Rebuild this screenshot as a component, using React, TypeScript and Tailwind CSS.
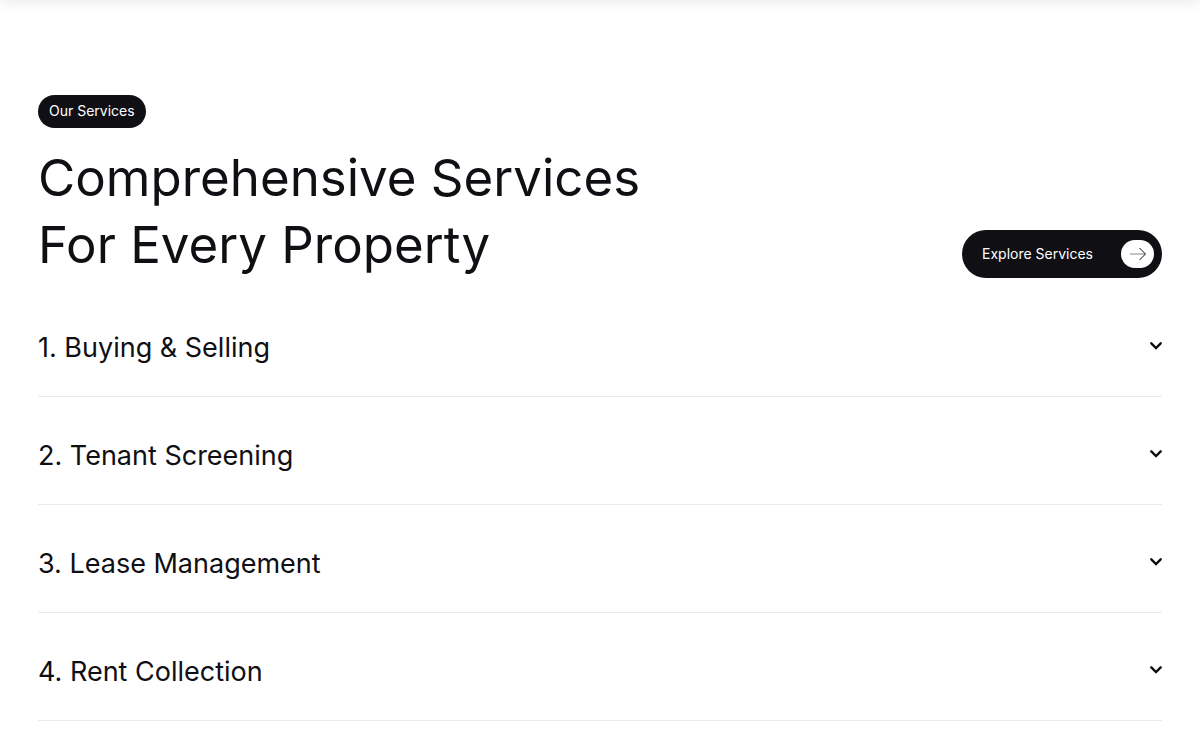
import React from 'react';

const services = ['Buying & Selling', 'Tenant Screening', 'Lease Management', 'Rent Collection'];

const App: React.FC = () => {
  return (
    <div className="flex min-h-screen flex-col bg-white font-['Inter','Liberation_Sans',sans-serif] text-[#0f0f14]">
      {/* Bottom edge of the site header */}
      <div className="-mt-12 h-12 bg-white shadow-[0_0_15px_rgba(15,15,40,0.11)]" />
      <section className="px-[38px] pt-[95px]">
        <div className="flex items-end justify-between">
          <div>
            <span className="inline-flex h-[33px] items-center rounded-full bg-[#0f0f14] px-[11px] pb-px text-sm text-white">
              Our Services
            </span>
            <h2 className="mt-4 text-[51px] leading-[67px]">
              Comprehensive Services
              <br />
              For Every Property
            </h2>
          </div>
          <button
            type="button"
            className="flex h-12 w-[200px] items-center justify-between rounded-full bg-[#0f0f14] pr-2 pl-5 text-sm text-white"
          >
            Explore Services
            <span className="flex h-7 w-[33px] items-center justify-center rounded-full bg-white">
              <svg width="16" height="14" viewBox="0 0 16 14" fill="none" stroke="#0f0f14" aria-hidden="true">
                <path d="M0 7h15" strokeOpacity="0.5" />
                <path d="M9.5 1L15.5 7l-6 6" />
              </svg>
            </span>
          </button>
        </div>
        <div className="mt-[11px]">
          {services.map((service, index) => (
            <h3 key={service} className="border-b border-[#ebebeb]">
              <button
                type="button"
                aria-expanded="false"
                className="flex h-[107px] w-full items-center justify-between pt-[11px] text-left text-[27px]"
              >
                {index + 1}. {service}
                <svg
                  width="12"
                  height="14"
                  viewBox="0 0 12 14"
                  fill="none"
                  stroke="currentColor"
                  strokeWidth="2.4"
                  strokeLinecap="round"
                  aria-hidden="true"
                >
                  <path d="M1.3 2.3L6 7l4.7-4.7" />
                </svg>
              </button>
            </h3>
          ))}
        </div>
      </section>
    </div>
  );
};

export default App;
